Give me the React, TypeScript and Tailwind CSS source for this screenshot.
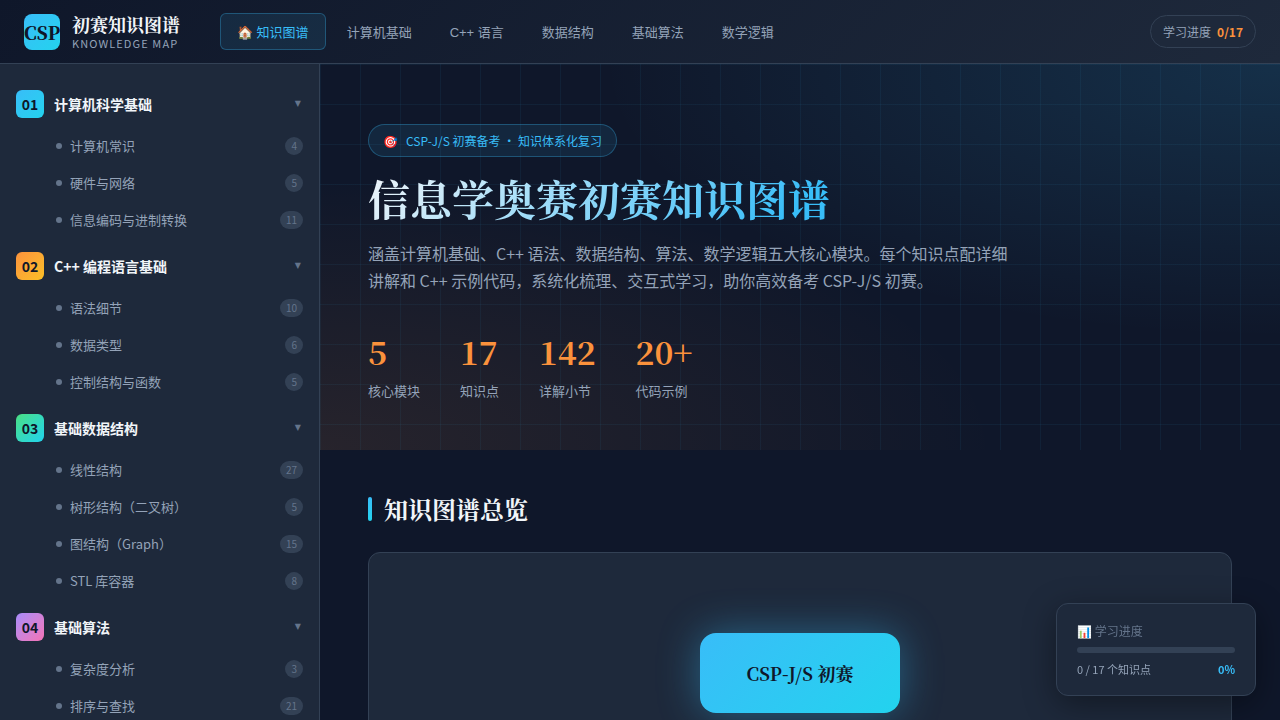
import React, { useState } from "react";

interface Topic {
  name: string;
  count: number;
}

interface Module {
  id: string;
  title: string;
  badge: string;
  topics: Topic[];
}

const NAV_ITEMS = ["🏠 知识图谱", "计算机基础", "C++ 语言", "数据结构", "基础算法", "数学逻辑"];

const MODULES: Module[] = [
  {
    id: "01",
    title: "计算机科学基础",
    badge: "from-[#38bdf8] to-[#22d3ee]",
    topics: [
      { name: "计算机常识", count: 4 },
      { name: "硬件与网络", count: 5 },
      { name: "信息编码与进制转换", count: 11 },
    ],
  },
  {
    id: "02",
    title: "C++ 编程语言基础",
    badge: "from-[#fb923c] to-[#fbbf24]",
    topics: [
      { name: "语法细节", count: 10 },
      { name: "数据类型", count: 6 },
      { name: "控制结构与函数", count: 5 },
    ],
  },
  {
    id: "03",
    title: "基础数据结构",
    badge: "from-[#4ade80] to-[#22d3ee]",
    topics: [
      { name: "线性结构", count: 27 },
      { name: "树形结构（二叉树）", count: 5 },
      { name: "图结构（Graph）", count: 15 },
      { name: "STL 库容器", count: 8 },
    ],
  },
  {
    id: "04",
    title: "基础算法",
    badge: "from-[#a78bfa] to-[#f472b6]",
    topics: [
      { name: "复杂度分析", count: 3 },
      { name: "排序与查找", count: 21 },
    ],
  },
];

const STATS = [
  { value: "5", label: "核心模块" },
  { value: "17", label: "知识点" },
  { value: "142", label: "详解小节" },
  { value: "20+", label: "代码示例" },
];

const TOTAL = 17;

const Header: React.FC<{ done: number }> = ({ done }) => {
  const [active, setActive] = useState(0);

  return (
    <header className="flex h-16 shrink-0 items-center border-b border-[#334155] bg-linear-135 from-[#0f172a] to-[#1e293b] px-6">
      <div className="flex items-center gap-3">
        <div className="flex size-9 items-center justify-center rounded-lg bg-linear-135 from-[#38bdf8] to-[#22d3ee] font-['Noto_Serif_CJK_SC','Noto_Serif_SC',serif] text-lg font-black text-[#0f172a]">
          CSP
        </div>
        <div>
          <div className="font-['Noto_Serif_CJK_SC','Noto_Serif_SC',serif] text-lg leading-[22px] font-bold">初赛知识图谱</div>
          <div className="text-[11px] leading-4 tracking-widest text-[#94a3b8]">KNOWLEDGE MAP</div>
        </div>
      </div>

      <nav className="ml-10 flex gap-1 font-['Liberation_Sans','Noto_Sans_CJK_SC',sans-serif]">
        {NAV_ITEMS.map((item, i) => (
          <button
            key={item}
            onClick={() => setActive(i)}
            className={`rounded-md border px-4 pt-[9px] pb-[7px] text-[13px] leading-[19px] ${
              i === active
                ? "border-[#38bdf8]/30 bg-[#38bdf8]/10 text-[#38bdf8]"
                : "border-transparent text-[#94a3b8]"
            }`}
          >
            {item}
          </button>
        ))}
      </nav>

      <div className="ml-auto flex gap-1.5 rounded-full border border-[#334155] bg-[#1e293b] px-3 py-1.5 text-xs leading-[19px] text-[#94a3b8]">
        <span>学习进度</span>
        <span className="font-bold text-[#fb923c]">{done}/{TOTAL}</span>
      </div>
    </header>
  );
};

const ModuleGroup: React.FC<{ module: Module }> = ({ module }) => {
  const [open, setOpen] = useState(true);

  return (
    <div className="mb-1">
      <button onClick={() => setOpen(!open)} className="flex w-full items-center gap-2.5 px-4 pt-2.5 pb-[9px] text-left">
        <span className={`flex size-7 items-center justify-center rounded-md bg-linear-135 text-sm font-bold text-[#0f172a] ${module.badge}`}>
          {module.id}
        </span>
        <span className="flex-1 text-sm font-bold">{module.title}</span>
        <span className="mr-0.5 font-['DejaVu_Sans',sans-serif] text-[8px] text-[#64748b]">{open ? "▼" : "▶"}</span>
      </button>
      {open && (
        <ul>
          {module.topics.map((topic) => (
            <li key={topic.name}>
              <a href="#" className="flex items-center gap-2 py-2 pr-4 pl-14 text-[13px] leading-[21px] text-[#94a3b8]">
                <span className="size-1.5 rounded-full bg-[#64748b]" />
                <span className="flex-1">{topic.name}</span>
                <span className="rounded-full bg-[#334155] px-1.5 py-px text-[10px] leading-4 text-[#64748b]">{topic.count}</span>
              </a>
            </li>
          ))}
        </ul>
      )}
    </div>
  );
};

const Hero: React.FC = () => (
  <section className="bg-[linear-gradient(rgba(56,189,248,0.06)_1px,transparent_1px),linear-gradient(90deg,rgba(56,189,248,0.06)_1px,transparent_1px),radial-gradient(ellipse_at_top_right,rgba(56,189,248,0.15),transparent_50%),radial-gradient(ellipse_at_bottom_left,rgba(251,146,60,0.1),transparent_50%)] bg-size-[40px_40px,40px_40px,100%_100%,100%_100%] px-12 pt-[60px] pb-12">
    <div className="inline-flex items-center gap-2 rounded-full border border-[#38bdf8]/30 bg-[#38bdf8]/10 px-3.5 py-1.5 align-top text-xs leading-[19px] text-[#38bdf8]">
      <span>🎯</span>
      <span>CSP-J/S 初赛备考 · 知识体系化复习</span>
    </div>
    <h1 className="mt-[15px] w-fit bg-[linear-gradient(135deg,#f1f5f9,#38bdf8_90%)] bg-clip-text font-['Noto_Serif_CJK_SC','Noto_Serif_SC',serif] text-[42px] leading-[52px] font-bold text-transparent">
      信息学奥赛初赛知识图谱
    </h1>
    <p className="mt-4 max-w-[640px] text-base leading-[27px] text-[#94a3b8]">
      涵盖计算机基础、C++ 语法、数据结构、算法、数学逻辑五大核心模块。每个知识点配详细讲解和 C++ 示例代码，系统化梳理、交互式学习，助你高效备考 CSP-J/S 初赛。
    </p>
    <div className="mt-9 flex gap-10">
      {STATS.map((stat) => (
        <div key={stat.label}>
          <div className="font-['Noto_Serif_CJK_SC','Noto_Serif_SC',serif] text-[32px] leading-[42px] font-bold text-[#fb923c]">{stat.value}</div>
          <div className="mt-2 text-[13px] leading-[22px] text-[#94a3b8]">{stat.label}</div>
        </div>
      ))}
    </div>
  </section>
);

const ProgressCard: React.FC<{ done: number }> = ({ done }) => {
  const percent = Math.round((done / TOTAL) * 100);

  return (
    <aside className="fixed right-6 bottom-6 w-50 rounded-xl border border-[#334155] bg-[#1e293b] px-5 py-4 shadow-[0_8px_32px_rgba(0,0,0,0.4)]">
      <div className="text-xs leading-[21px] text-[#64748b]">📊 学习进度</div>
      <div className="my-1.5 h-1.5 overflow-hidden rounded-full bg-[#334155]">
        <div className="h-full bg-linear-90 from-[#38bdf8] to-[#22d3ee]" style={{ width: `${percent}%` }} />
      </div>
      <div className="flex justify-between text-[11px] leading-5 text-[#94a3b8]">
        <span>{done} / {TOTAL} 个知识点</span>
        <span className="font-bold text-[#38bdf8]">{percent}%</span>
      </div>
    </aside>
  );
};

export default function App() {
  const done = 0;

  return (
    <div className="flex h-screen flex-col bg-[#0f172a] font-['Noto_Sans_CJK_SC','Noto_Sans_SC',sans-serif] text-[#f1f5f9]">
      <Header done={done} />
      <div className="flex min-h-0 flex-1">
        <aside className="w-80 shrink-0 overflow-y-auto border-r border-[#334155] bg-[#1e293b] py-4 [scrollbar-width:none]">
          {MODULES.map((module) => (
            <ModuleGroup key={module.id} module={module} />
          ))}
        </aside>

        <main className="min-w-0 flex-1 overflow-y-auto [scrollbar-width:none]">
          <Hero />
          <section className="px-12 py-10">
            <h2 className="flex items-center gap-3 font-['Noto_Serif_CJK_SC','Noto_Serif_SC',serif] text-2xl leading-[38px] font-bold">
              <span className="h-6 w-1 rounded-xs bg-linear-180 from-[#38bdf8] to-[#22d3ee]" />
              知识图谱总览
            </h2>
            {/* Root node of the map */}
            <div className="mt-6 flex justify-center rounded-xl border border-[#334155] bg-[#1e293b] py-20">
              <div className="flex h-20 w-50 items-center justify-center rounded-2xl bg-linear-135 from-[#38bdf8] to-[#22d3ee] font-['Noto_Serif_CJK_SC','Noto_Serif_SC',serif] text-lg font-bold text-[#0f172a] shadow-[0_0_40px_rgba(56,189,248,0.4)]">
                CSP-J/S 初赛
              </div>
            </div>
          </section>
        </main>
      </div>
      <ProgressCard done={done} />
    </div>
  );
}
